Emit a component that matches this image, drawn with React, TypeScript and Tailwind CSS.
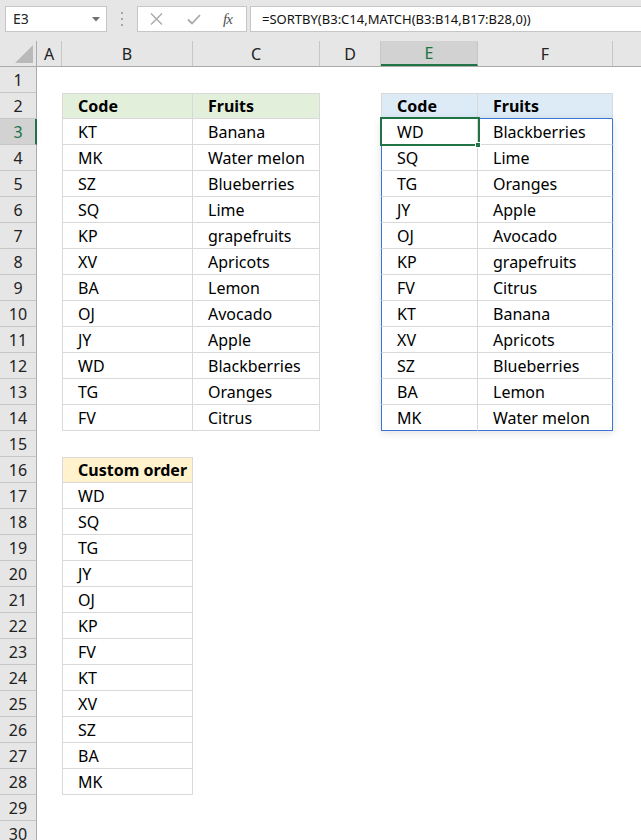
import React from "react";

type Col = "A" | "B" | "C" | "D" | "E" | "F" | "G";
const COLS: { id: Col; w: string }[] = [
  { id: "A", w: "w-[25px]" },
  { id: "B", w: "w-[131px]" },
  { id: "C", w: "w-[127px]" },
  { id: "D", w: "w-[61px]" },
  { id: "E", w: "w-[97px]" },
  { id: "F", w: "w-[135px]" },
  { id: "G", w: "flex-1" },
];

const T1: [string, string][] = [
  ["KT", "Banana"],
  ["MK", "Water melon"],
  ["SZ", "Blueberries"],
  ["SQ", "Lime"],
  ["KP", "grapefruits"],
  ["XV", "Apricots"],
  ["BA", "Lemon"],
  ["OJ", "Avocado"],
  ["JY", "Apple"],
  ["WD", "Blackberries"],
  ["TG", "Oranges"],
  ["FV", "Citrus"],
];
const T2: [string, string][] = [
  ["WD", "Blackberries"],
  ["SQ", "Lime"],
  ["TG", "Oranges"],
  ["JY", "Apple"],
  ["OJ", "Avocado"],
  ["KP", "grapefruits"],
  ["FV", "Citrus"],
  ["KT", "Banana"],
  ["XV", "Apricots"],
  ["SZ", "Blueberries"],
  ["BA", "Lemon"],
  ["MK", "Water melon"],
];
const T3 = ["WD", "SQ", "TG", "JY", "OJ", "KP", "FV", "KT", "XV", "SZ", "BA", "MK"];

function cellInfo(r: number, c: Col): { text?: string; cls: string } {
  // Table 1
  if ((c === "B" || c === "C") && r >= 2 && r <= 14) {
    let cls = "border-[#d9d9d9] border-r border-b";
    if (c === "B") cls += " border-l";
    if (r === 2) cls += " border-t bg-[#e2efda] font-bold";
    const text = r === 2 ? (c === "B" ? "Code" : "Fruits") : T1[r - 3][c === "B" ? 0 : 1];
    return { text, cls };
  }
  // Table 3
  if (c === "B" && r >= 16 && r <= 28) {
    let cls = "border-[#d9d9d9] border-r border-b border-l";
    if (r === 16) cls += " border-t bg-[#fff2cc] font-bold";
    const text = r === 16 ? "Custom order" : T3[r - 17];
    return { text, cls };
  }
  // Table 2
  if ((c === "E" || c === "F") && r >= 2 && r <= 14) {
    let cls = "border-[#d9d9d9] border-r border-b";
    if (c === "E") cls += " border-l";
    if (r === 2) cls += " border-t bg-[#ddebf7] font-bold border-b-[#3a74d4]";
    if (r >= 3) {
      if (c === "E") cls += " border-l-[#3a74d4]";
      if (c === "F") cls += " border-r-[#3a74d4]";
      if (r === 14) cls += " border-b-[#3a74d4]";
    }
    const text = r === 2 ? (c === "E" ? "Code" : "Fruits") : T2[r - 3][c === "E" ? 0 : 1];
    return { text, cls };
  }
  return { cls: "" };
}

function Toolbar() {
  return (
    <div className="h-[41px] bg-[#e6e6e6] flex items-start pt-[6px] pl-[5px]">
      <div className="w-[102px] h-[26px] bg-white border border-[#c6c6c6] flex items-center justify-between pl-[7px] pr-[6px]">
        <span className="text-[14px] text-[#222] leading-none">E3</span>
        <svg width="8" height="5" viewBox="0 0 8 5">
          <path d="M0 0 L8 0 L4 4.5 Z" fill="#707070" />
        </svg>
      </div>
      <div className="w-[30px] h-[26px] flex flex-col items-center justify-center gap-[4px]">
        <div className="w-[2px] h-[2px] bg-[#a8a8a8]" />
        <div className="w-[2px] h-[2px] bg-[#a8a8a8]" />
        <div className="w-[2px] h-[2px] bg-[#a8a8a8]" />
      </div>
      <div className="w-[110px] h-[26px] bg-white border border-[#c6c6c6] flex items-center pl-[12px]">
        <svg width="13" height="12" viewBox="0 0 13 12" className="mr-[24px]">
          <path d="M1 0.5 L12 11.5 M12 0.5 L1 11.5" stroke="#a9a9a9" strokeWidth="1.4" />
        </svg>
        <svg width="14" height="11" viewBox="0 0 14 11" className="mr-[22px]">
          <path d="M1 5.5 L5 9.5 L13 1" stroke="#a9a9a9" strokeWidth="1.8" fill="none" />
        </svg>
        <span className="font-['Liberation_Serif',serif] italic text-[15px] text-[#505050] leading-none tracking-[-1px]">
          fx
        </span>
      </div>
      <div className="ml-[3px] flex-1 h-[26px] bg-white border border-[#c6c6c6] border-r-0 flex items-center pl-[11px]">
        <span className="text-[13px] text-[#111] leading-none whitespace-nowrap">
          =SORTBY(B3:C14,MATCH(B3:B14,B17:B28,0))
        </span>
      </div>
    </div>
  );
}

function HeaderRow() {
  return (
    <div className="h-[26px] flex bg-[#e6e6e6] border-b border-[#ababab]">
      <div className="w-[37px] h-full border-r border-[#ababab] flex items-end justify-end pr-[3px] pb-[3px]">
        <svg width="18" height="18" viewBox="0 0 18 18">
          <path d="M18 0 L18 18 L0 18 Z" fill="#b9b9b9" />
        </svg>
      </div>
      {COLS.map((c) =>
        c.id === "E" ? (
          <div
            key={c.id}
            className={`${c.w} h-full bg-[#d2d2d2] border-r border-[#c6c6c6] border-b-2 border-b-[#217346] flex items-center justify-center text-[16px] text-[#217346]`}
          >
            E
          </div>
        ) : (
          <div
            key={c.id}
            className={`${c.w} h-full ${c.id === "G" ? "" : "border-r border-[#c6c6c6]"} flex items-center justify-center text-[16px] text-[#222]`}
          >
            {c.id === "G" ? "" : c.id}
          </div>
        )
      )}
    </div>
  );
}

function SheetRow({ r }: { r: number }) {
  const sel = r === 3;
  return (
    <div className="h-[26px] flex">
      <div
        className={
          sel
            ? "w-[37px] h-full bg-[#d2d2d2] border-b border-[#c6c6c6] border-r-2 border-r-[#217346] flex items-center justify-center text-[16px] text-[#217346] pl-[1px]"
            : "w-[37px] h-full bg-[#e6e6e6] border-b border-[#c6c6c6] border-r border-r-[#ababab] flex items-center justify-center text-[16px] text-[#222]"
        }
      >
        {r}
      </div>
      {COLS.map((c) => {
        const info = cellInfo(r, c.id);
        return (
          <div
            key={c.id}
            className={`${c.w} h-full flex items-center pl-[15px] text-[16px] text-black whitespace-nowrap overflow-hidden ${info.cls}`}
          >
            {info.text ?? ""}
          </div>
        );
      })}
    </div>
  );
}

export default function App() {
  const rows = Array.from({ length: 30 }, (_, i) => i + 1);
  return (
    <div className="w-[641px] h-[840px] overflow-hidden bg-white relative font-['Noto_Sans',sans-serif]">
      <Toolbar />
      <HeaderRow />
      <div>
        {rows.map((r) => (
          <SheetRow key={r} r={r} />
        ))}
      </div>
      {/* spill range shadow */}
      <div className="absolute left-[381px] top-[118px] w-[232px] h-[313px] shadow-[0_2px_8px_rgba(0,0,0,0.12)] pointer-events-none" />
      {/* selection */}
      <div className="absolute left-[380px] top-[117px] w-[100px] h-[29px] border-2 border-[#217346] pointer-events-none" />
      <div className="absolute left-[475px] top-[142px] w-[6px] h-[6px] bg-[#217346] border border-white pointer-events-none" />
    </div>
  );
}
